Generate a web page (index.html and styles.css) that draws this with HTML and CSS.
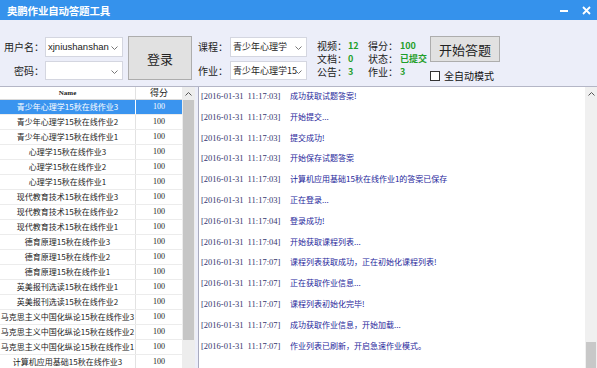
FILE: index.html
```html
<!DOCTYPE html>
<html lang="zh-CN">
<head>
    <meta charset="UTF-8">
    <title>奥鹏作业自动答题工具</title>
    <link rel="stylesheet" href="styles.css">
</head>
<body>
    <div class="window">
        <!-- Title bar -->
        <div class="titlebar">
            <span class="title">奥鹏作业自动答题工具</span>
            <div class="win-btns">
                <span class="win-min"></span>
                <svg class="win-close" width="9" height="9" viewBox="0 0 9 9"><path d="M1 1L8 8M8 1L1 8" stroke="#fff" stroke-width="1.8"/></svg>
            </div>
        </div>

        <!-- Toolbar -->
        <div class="toolbar">
            <div class="field-group">
                <div class="field">
                    <label class="field-label">用户名：</label>
                    <div class="combo">xjniushanshan<svg class="arrow" width="7" height="4" viewBox="0 0 7 4"><path d="M0.5 0.5L3.5 3.5L6.5 0.5" fill="none" stroke="#777"/></svg></div>
                </div>
                <div class="field">
                    <label class="field-label">密码：</label>
                    <div class="combo"><svg class="arrow" width="7" height="4" viewBox="0 0 7 4"><path d="M0.5 0.5L3.5 3.5L6.5 0.5" fill="none" stroke="#777"/></svg></div>
                </div>
            </div>

            <button class="btn btn-login">登录</button>

            <div class="field-group course-group">
                <div class="field">
                    <label class="field-label short">课程：</label>
                    <div class="combo combo-course">青少年心理学<svg class="arrow" width="7" height="4" viewBox="0 0 7 4"><path d="M0.5 0.5L3.5 3.5L6.5 0.5" fill="none" stroke="#777"/></svg></div>
                </div>
                <div class="field">
                    <label class="field-label short">作业：</label>
                    <div class="combo combo-course"><span class="combo-text">青少年心理学15</span><svg class="arrow" width="7" height="4" viewBox="0 0 7 4"><path d="M0.5 0.5L3.5 3.5L6.5 0.5" fill="none" stroke="#777"/></svg></div>
                </div>
            </div>

            <div class="stats">
                <span class="stat-label">视频：</span><span class="stat-value">12</span>
                <span class="stat-label">得分：</span><span class="stat-value">100</span>
                <span class="stat-label">文档：</span><span class="stat-value">0</span>
                <span class="stat-label">状态：</span><span class="stat-value">已提交</span>
                <span class="stat-label">公告：</span><span class="stat-value">3</span>
                <span class="stat-label">作业：</span><span class="stat-value">3</span>
            </div>

            <div class="actions">
                <button class="btn btn-start">开始答题</button>
                <label class="auto-mode"><span class="checkbox"></span>全自动模式</label>
            </div>
        </div>

        <!-- Main area -->
        <div class="main">
            <div class="list-panel">
                <div class="list">
                    <div class="list-head"><span class="col-name">Name</span><span class="col-score">得分</span></div>
                    <div class="list-row selected"><span class="col-name">青少年心理学15秋在线作业3</span><span class="col-score">100</span></div>
                    <div class="list-row"><span class="col-name">青少年心理学15秋在线作业2</span><span class="col-score">100</span></div>
                    <div class="list-row"><span class="col-name">青少年心理学15秋在线作业1</span><span class="col-score">100</span></div>
                    <div class="list-row"><span class="col-name">心理学15秋在线作业3</span><span class="col-score">100</span></div>
                    <div class="list-row"><span class="col-name">心理学15秋在线作业2</span><span class="col-score">100</span></div>
                    <div class="list-row"><span class="col-name">心理学15秋在线作业1</span><span class="col-score">100</span></div>
                    <div class="list-row"><span class="col-name">现代教育技术15秋在线作业3</span><span class="col-score">100</span></div>
                    <div class="list-row"><span class="col-name">现代教育技术15秋在线作业2</span><span class="col-score">100</span></div>
                    <div class="list-row"><span class="col-name">现代教育技术15秋在线作业1</span><span class="col-score">100</span></div>
                    <div class="list-row"><span class="col-name">德育原理15秋在线作业3</span><span class="col-score">100</span></div>
                    <div class="list-row"><span class="col-name">德育原理15秋在线作业2</span><span class="col-score">100</span></div>
                    <div class="list-row"><span class="col-name">德育原理15秋在线作业1</span><span class="col-score">100</span></div>
                    <div class="list-row"><span class="col-name">英美报刊选读15秋在线作业1</span><span class="col-score">100</span></div>
                    <div class="list-row"><span class="col-name">英美报刊选读15秋在线作业2</span><span class="col-score">100</span></div>
                    <div class="list-row"><span class="col-name">马克思主义中国化纵论15秋在线作业3</span><span class="col-score">100</span></div>
                    <div class="list-row"><span class="col-name">马克思主义中国化纵论15秋在线作业2</span><span class="col-score">100</span></div>
                    <div class="list-row"><span class="col-name">马克思主义中国化纵论15秋在线作业1</span><span class="col-score">100</span></div>
                    <div class="list-row"><span class="col-name">计算机应用基础15秋在线作业3</span><span class="col-score">100</span></div>
                </div>
                <div class="scrollbar list-scroll">
                    <div class="scroll-up"><svg width="7" height="4" viewBox="0 0 7 4"><path d="M0.5 3.5L3.5 0.5L6.5 3.5" fill="none" stroke="#555"/></svg></div>
                    <div class="scroll-thumb"></div>
                </div>
            </div>

            <div class="log-panel">
                <div class="log">
                    <div class="log-entry"><span class="log-time">[2016-01-31 11:17:03]</span><span class="log-msg">成功获取试题答案!</span></div>
                    <div class="log-entry"><span class="log-time">[2016-01-31 11:17:03]</span><span class="log-msg">开始提交...</span></div>
                    <div class="log-entry"><span class="log-time">[2016-01-31 11:17:03]</span><span class="log-msg">提交成功!</span></div>
                    <div class="log-entry"><span class="log-time">[2016-01-31 11:17:03]</span><span class="log-msg">开始保存试题答案</span></div>
                    <div class="log-entry"><span class="log-time">[2016-01-31 11:17:03]</span><span class="log-msg">计算机应用基础15秋在线作业1的答案已保存</span></div>
                    <div class="log-entry"><span class="log-time">[2016-01-31 11:17:03]</span><span class="log-msg">正在登录...</span></div>
                    <div class="log-entry"><span class="log-time">[2016-01-31 11:17:04]</span><span class="log-msg">登录成功!</span></div>
                    <div class="log-entry"><span class="log-time">[2016-01-31 11:17:04]</span><span class="log-msg">开始获取课程列表...</span></div>
                    <div class="log-entry"><span class="log-time">[2016-01-31 11:17:07]</span><span class="log-msg">课程列表获取成功，正在初始化课程列表!</span></div>
                    <div class="log-entry"><span class="log-time">[2016-01-31 11:17:07]</span><span class="log-msg">正在获取作业信息...</span></div>
                    <div class="log-entry"><span class="log-time">[2016-01-31 11:17:07]</span><span class="log-msg">课程列表初始化完毕!</span></div>
                    <div class="log-entry"><span class="log-time">[2016-01-31 11:17:07]</span><span class="log-msg">成功获取作业信息，开始加载...</span></div>
                    <div class="log-entry"><span class="log-time">[2016-01-31 11:17:07]</span><span class="log-msg">作业列表已刷新，开启急速作业模式。</span></div>
                </div>
                <div class="scrollbar log-scroll">
                    <div class="scroll-up"><svg width="7" height="4" viewBox="0 0 7 4"><path d="M0.5 3.5L3.5 0.5L6.5 3.5" fill="none" stroke="#555"/></svg></div>
                    <div class="scroll-track"></div>
                    <div class="scroll-thumb"></div>
                </div>
            </div>
        </div>
    </div>
</body>
</html>
```

FILE: styles.css
```css
:root {
    --title-blue: #3592ec;
    --panel-bg: #eceef9;
    --select-blue: #3a94ef;
    --stat-green: #1f9e2a;
    --log-time: #35356e;
    --log-msg: #25259a;
}

* {
    margin: 0;
    padding: 0;
    box-sizing: border-box;
}

body {
    width: 597px;
    height: 368px;
    overflow: hidden;
    font-family: "Noto Sans CJK SC", "DejaVu Sans", sans-serif;
    color: #222;
    background: var(--panel-bg);
}

.window {
    display: flex;
    flex-direction: column;
    height: 368px;
}

/* Title bar */
.titlebar {
    height: 20px;
    background: var(--title-blue);
    display: flex;
    align-items: center;
    justify-content: space-between;
    padding: 0 6px 0 7px;
}

.title {
    color: #fff;
    font-size: 10.5px;
    font-weight: bold;
    letter-spacing: -0.2px;
}

.win-btns {
    display: flex;
    align-items: center;
    gap: 14px;
}

.win-min {
    width: 8px;
    height: 2px;
    background: #fff;
    margin-top: 2px;
}

/* Toolbar */
.toolbar {
    height: 67px;
    display: flex;
    align-items: flex-start;
    padding-top: 16px;
    border-bottom: 1px solid #b4b6c6;
}

.field-group {
    display: flex;
    flex-direction: column;
    gap: 4px;
    padding-top: 1px;
}

.field {
    display: flex;
    align-items: center;
    height: 20px;
}

.field + .field {
    height: 19px;
}

.field-label {
    width: 44px;
    text-align: right;
    font-size: 10px;
    line-height: 14px;
    margin-right: 1px;
    color: #222;
    white-space: nowrap;
}

.field-label.short {
    width: 31px;
    margin-right: 2px;
}

.combo {
    position: relative;
    width: 78px;
    height: 100%;
    background: #fff;
    border: 1px solid #d4d6e0;
    font-family: "Liberation Sans", "Noto Sans CJK SC", sans-serif;
    font-size: 9.5px;
    line-height: 18px;
    padding-left: 2px;
    padding-right: 10px;
    white-space: nowrap;
    overflow: hidden;
    color: #222;
}

.combo-course {
    width: 77px;
    font-family: "Noto Sans CJK SC", sans-serif;
    font-size: 9px;
}

.arrow {
    position: absolute;
    right: 4px;
    top: 8px;
}

.btn {
    font-family: "Noto Sans CJK SC", sans-serif;
    background: #e1e1e1;
    border: 1px solid #adadad;
    color: #222;
}

.btn-login {
    width: 64px;
    height: 44px;
    margin-left: 5px;
    font-size: 13px;
}

.course-group {
    margin-left: 5px;
}

/* Stats */
.stats {
    margin-left: 10px;
    padding-top: 3px;
    display: grid;
    grid-template-columns: 31px 20px 32px 30px;
    grid-auto-rows: 13px;
    align-items: center;
    font-size: 10px;
    line-height: 13px;
    white-space: nowrap;
}

.stat-label {
    color: #222;
}

.stat-value {
    color: var(--stat-green);
    font-weight: bold;
    font-size: 9px;
}

/* Actions */
.actions {
    display: flex;
    flex-direction: column;
    gap: 6px;
}

.btn-start {
    width: 70px;
    height: 26px;
    font-size: 13px;
}

.auto-mode {
    display: flex;
    align-items: center;
    gap: 4px;
    font-size: 10px;
    color: #111;
}

.checkbox {
    width: 10px;
    height: 10px;
    border: 1px solid #333;
    background: #fff;
}

/* Main */
.main {
    flex: 1;
    display: flex;
    min-height: 0;
}

.list-panel {
    width: 195px;
    display: flex;
    background: #fff;
    overflow: hidden;
}

.list {
    width: 182px;
    font-size: 8px;
    color: #222;
}

.list-head,
.list-row {
    display: grid;
    grid-template-columns: 136px 46px;
    text-align: center;
    white-space: nowrap;
}

.list-head {
    height: 13px;
    line-height: 12px;
    background: #fff;
    border-bottom: 1px solid #dadada;
}

.list-head .col-name {
    font-family: "Liberation Serif", serif;
    font-size: 7px;
    font-weight: bold;
}

.list-head .col-score {
    font-size: 9px;
}

.list-row {
    height: 15px;
    line-height: 14px;
    border-bottom: 1px solid #ececec;
}

.col-name {
    border-right: 1px solid #e2e2e2;
    overflow: hidden;
}

.col-score {
    font-family: "Liberation Serif", serif;
    font-size: 8px;
}

.list-row.selected {
    background: var(--select-blue);
    color: #fff;
}

.list-row.selected .col-name {
    border-right-color: #fff;
}

.scrollbar {
    width: 13px;
    display: flex;
    flex-direction: column;
    background: #ededed;
}

.scroll-up {
    height: 13px;
    display: flex;
    align-items: center;
    justify-content: center;
}

.list-scroll .scroll-thumb {
    height: 240px;
    margin: 0 1px;
    background: #c6c6c6;
}

.log-panel {
    flex: 1;
    display: flex;
    margin-left: 3px;
    background: #fff;
    border-left: 1px solid #a9abc0;
}

.log {
    flex: 1;
    padding: 3px 0 0 2px;
    display: flex;
    flex-direction: column;
    gap: 8.8px;
    white-space: nowrap;
    overflow: hidden;
}

.log-entry {
    height: 12px;
    line-height: 12px;
    display: flex;
}

.log-time {
    font-family: "Liberation Serif", serif;
    font-size: 8.5px;
    color: var(--log-time);
    width: 89px;
    word-spacing: 2px;
}

.log-msg {
    font-size: 8px;
    color: var(--log-msg);
}

.log-scroll {
    width: 12px;
    background: #f0f0f0;
}

.log-scroll .scroll-track {
    flex: 1;
}

.log-scroll .scroll-thumb {
    height: 26px;
    margin: 0 1px;
    background: #c8c8c8;
}
```
